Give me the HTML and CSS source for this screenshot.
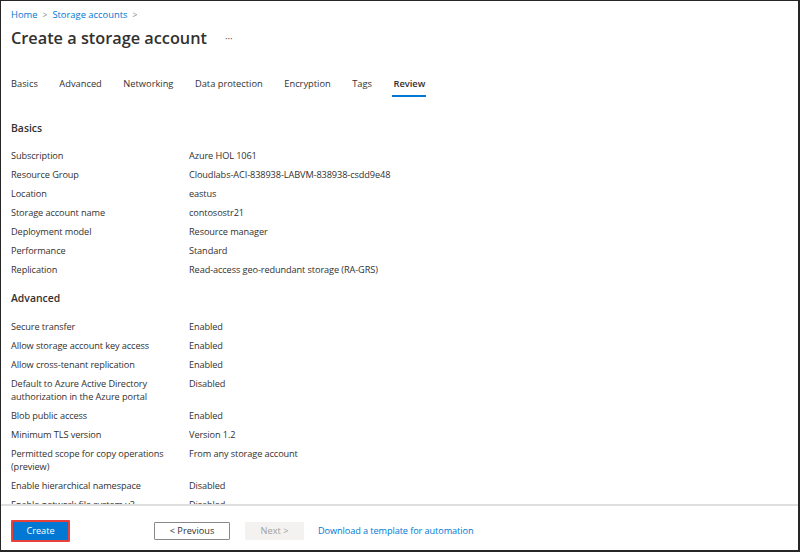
FILE: index.html
```html
<!DOCTYPE html>
<html>
<head>
<meta charset="utf-8">
<link rel="stylesheet" href="styles.css">
</head>
<body>
<div class="frame">
  <div class="top">
    <nav class="crumbs">
      <a class="crumb">Home</a><span class="chev">&gt;</span><a class="crumb">Storage accounts</a><span class="chev">&gt;</span>
    </nav>
    <div class="titlebar">
      <h1 class="title">Create a storage account</h1>
      <span class="more">···</span>
    </div>
    <div class="tabs">
      <span class="tab">Basics</span>
      <span class="tab">Advanced</span>
      <span class="tab">Networking</span>
      <span class="tab">Data protection</span>
      <span class="tab">Encryption</span>
      <span class="tab">Tags</span>
      <span class="tab active">Review</span>
    </div>
  </div>
  <div class="content">
    <h2 class="section">Basics</h2>
    <div class="row"><div class="label">Subscription</div><div class="value">Azure HOL 1061</div></div>
    <div class="row"><div class="label">Resource Group</div><div class="value">Cloudlabs-ACI-838938-LABVM-838938-csdd9e48</div></div>
    <div class="row"><div class="label">Location</div><div class="value">eastus</div></div>
    <div class="row"><div class="label">Storage account name</div><div class="value">contosostr21</div></div>
    <div class="row"><div class="label">Deployment model</div><div class="value">Resource manager</div></div>
    <div class="row"><div class="label">Performance</div><div class="value">Standard</div></div>
    <div class="row"><div class="label">Replication</div><div class="value">Read-access geo-redundant storage (RA-GRS)</div></div>
    <h2 class="section section-next">Advanced</h2>
    <div class="row"><div class="label">Secure transfer</div><div class="value">Enabled</div></div>
    <div class="row"><div class="label">Allow storage account key access</div><div class="value">Enabled</div></div>
    <div class="row"><div class="label">Allow cross-tenant replication</div><div class="value">Enabled</div></div>
    <div class="row"><div class="label">Default to Azure Active Directory authorization in the Azure portal</div><div class="value">Disabled</div></div>
    <div class="row"><div class="label">Blob public access</div><div class="value">Enabled</div></div>
    <div class="row"><div class="label">Minimum TLS version</div><div class="value">Version 1.2</div></div>
    <div class="row"><div class="label">Permitted scope for copy operations (preview)</div><div class="value">From any storage account</div></div>
    <div class="row"><div class="label">Enable hierarchical namespace</div><div class="value">Disabled</div></div>
    <div class="row"><div class="label">Enable network file system v3</div><div class="value">Disabled</div></div>
    <div class="row"><div class="label">Allow cross-tenant replication</div><div class="value">Enabled</div></div>
  </div>
  <div class="footer">
    <button class="btn primary">Create</button>
    <button class="btn secondary">&lt; Previous</button>
    <button class="btn disabled">Next &gt;</button>
    <a class="link">Download a template for automation</a>
  </div>
</div>
</body>
</html>
```

FILE: styles.css
```css
html, body {
  margin: 0;
  padding: 0;
  background: #ffffff;
}
body {
  font-family: "Open Sans", "Noto Sans", sans-serif;
  color: #323130;
  font-size: 9.2px;
  letter-spacing: -0.1px;
}
.frame {
  width: 800px;
  height: 552px;
  box-sizing: border-box;
  border-style: solid;
  border-color: #262626;
  border-width: 1px 2px 2px 1px;
  display: flex;
  flex-direction: column;
  overflow: hidden;
}
.top {
  padding: 0 0 0 10px;
}
.crumbs {
  display: flex;
  align-items: center;
  height: 14px;
  margin-top: 6px;
  font-size: 9.4px;
  letter-spacing: 0;
}
.crumb {
  color: #0078d4;
}
.chev {
  color: #8a8886;
  margin: 0 5px;
  font-size: 8.5px;
}
.titlebar {
  display: flex;
  align-items: center;
  height: 26px;
  margin-top: 4px;
}
.title {
  margin: 0;
  font-size: 16.3px;
  font-weight: 600;
  color: #323130;
  letter-spacing: 0;
}
.more {
  margin-left: 18px;
  color: #605e5c;
  font-size: 10px;
}
.tabs {
  display: flex;
  margin-top: 22px;
  height: 24px;
  font-size: 9.3px;
  letter-spacing: 0;
}
.tab {
  margin-right: 21.5px;
  height: 22px;
  line-height: 22px;
  color: #323130;
}
.tab.active {
  font-weight: 600;
  border-bottom: 2px solid #0078d4;
  padding: 0 1px;
  margin-left: -1px;
}
.content {
  flex: 1;
  overflow: hidden;
  padding: 12px 10px 0 10px;
}
.section {
  margin: 11px 0 10px 0;
  font-size: 10.4px;
  font-weight: 600;
  line-height: 16px;
  color: #323130;
  letter-spacing: 0;
}
.section-next {
  margin-bottom: 11px;
}
.row {
  display: flex;
  line-height: 13px;
  padding: 3px 0;
}
.label {
  width: 168px;
  margin-right: 10px;
  color: #323130;
}
.value {
  color: #323130;
}
.footer {
  height: 46px;
  box-sizing: border-box;
  border-top: 2px solid #e1dfdd;
  display: flex;
  align-items: center;
  padding: 5px 0 0 10px;
}
.btn {
  font-family: inherit;
  font-size: 9.2px;
  letter-spacing: 0;
  line-height: 14px;
  height: 18px;
  padding: 0;
  border-radius: 1px;
  box-sizing: border-box;
}
.btn.primary {
  width: 59px;
  height: 22px;
  background: #0078d4;
  color: #ffffff;
  border: 2px solid #e8403a;
  margin-right: 84px;
}
.btn.secondary {
  width: 76px;
  background: #ffffff;
  color: #323130;
  border: 1px solid #8a8886;
  margin-right: 15px;
}
.btn.disabled {
  width: 59px;
  background: #f3f2f1;
  color: #a19f9d;
  border: 1px solid #f3f2f1;
  margin-right: 14px;
}
.link {
  color: #0078d4;
}
```
